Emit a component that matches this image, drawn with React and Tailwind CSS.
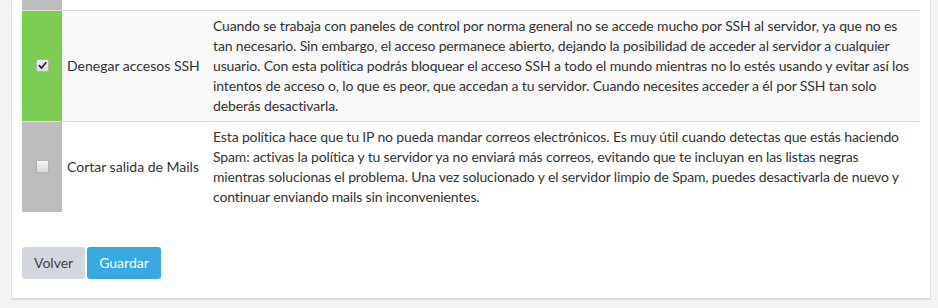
import { useState } from 'react';

// lines are kept as the reference breaks them
const policies = [
  {
    id: 'ssh',
    name: 'Denegar accesos SSH',
    active: true,
    lines: [
      'Cuando se trabaja con paneles de control por norma general no se accede mucho por SSH al servidor, ya que no es',
      'tan necesario. Sin embargo, el acceso permanece abierto, dejando la posibilidad de acceder al servidor a cualquier',
      'usuario. Con esta política podrás bloquear el acceso SSH a todo el mundo mientras no lo estés usando y evitar así los',
      'intentos de acceso o, lo que es peor, que accedan a tu servidor. Cuando necesites acceder a él por SSH tan solo',
      'deberás desactivarla.',
    ],
  },
  {
    id: 'mails',
    name: 'Cortar salida de Mails',
    active: false,
    lines: [
      'Esta política hace que tu IP no pueda mandar correos electrónicos. Es muy útil cuando detectas que estás haciendo',
      'Spam: activas la política y tu servidor ya no enviará más correos, evitando que te incluyan en las listas negras',
      'mientras solucionas el problema. Una vez solucionado y el servidor limpio de Spam, puedes desactivarla de nuevo y',
      'continuar enviando mails sin inconvenientes.',
    ],
  },
];

function Check({ checked, onClick }) {
  return (
    <button
      type="button"
      onClick={onClick}
      className="mx-auto flex h-[13px] w-[13px] items-center justify-center rounded-[2px] border border-[#b4b4b4] bg-gradient-to-b from-[#f4f4f4] to-[#d9d9d9] shadow-[0_0_1px_rgba(0,0,0,0.15)]"
    >
      {checked && (
        <svg viewBox="0 0 10 10" className="h-[9px] w-[9px]">
          <path d="M1.5 5.2 L4 7.8 L8.6 2" fill="none" stroke="#2b2b2b" strokeWidth="2" strokeLinecap="round" strokeLinejoin="round" />
        </svg>
      )}
    </button>
  );
}

export default function App() {
  const [state, setState] = useState(
    Object.fromEntries(policies.map((p) => [p.id, p.active]))
  );

  return (
    <div className="min-h-screen bg-[#f4f4f4] pl-[11px] pr-[7px] pb-2 font-['Lato','Noto_Sans',sans-serif] text-sm leading-5 text-[#333]">
      <div className="border-x border-b-2 border-x-[#e4e4e4] border-b-[#dcdce1] bg-white px-[10px] pb-[19px]">
        <table className="w-full table-fixed border-collapse">
          <colgroup>
            <col className="w-10" />
            <col className="w-[146px]" />
            <col />
          </colgroup>
          <tbody>
            <tr>
              <td className="h-[10px] bg-[#bdbdbd] p-0" />
              <td className="p-0" />
              <td className="p-0" />
            </tr>
            {policies.map((p, i) => (
              <tr key={p.id} className={i % 2 === 0 ? 'bg-[#f9f9f9]' : 'bg-white'}>
                <td className={`border-t border-[#dddddd] p-[5px] align-middle ${state[p.id] ? 'bg-[#7ccd52]' : 'bg-[#bdbdbd]'}`}>
                  <Check checked={state[p.id]} onClick={() => setState({ ...state, [p.id]: !state[p.id] })} />
                </td>
                <td className="whitespace-nowrap border-t border-[#dddddd] p-[5px] align-middle">{p.name}</td>
                <td className="whitespace-nowrap border-t border-[#dddddd] p-[5px] align-top tracking-[-0.14px]">
                  {p.lines.map((line, j) => (
                    <span key={j} className="block">{line}</span>
                  ))}
                </td>
              </tr>
            ))}
          </tbody>
        </table>

        <div className="mt-[35px] flex gap-[2px]">
          <button type="button" className="rounded-[3px] bg-[#d2d6de] px-3 py-1.5 text-[#444]">
            Volver
          </button>
          <button type="button" className="rounded-[3px] bg-[#38a9e1] px-3 py-1.5 text-white">
            Guardar
          </button>
        </div>
      </div>
    </div>
  );
}
